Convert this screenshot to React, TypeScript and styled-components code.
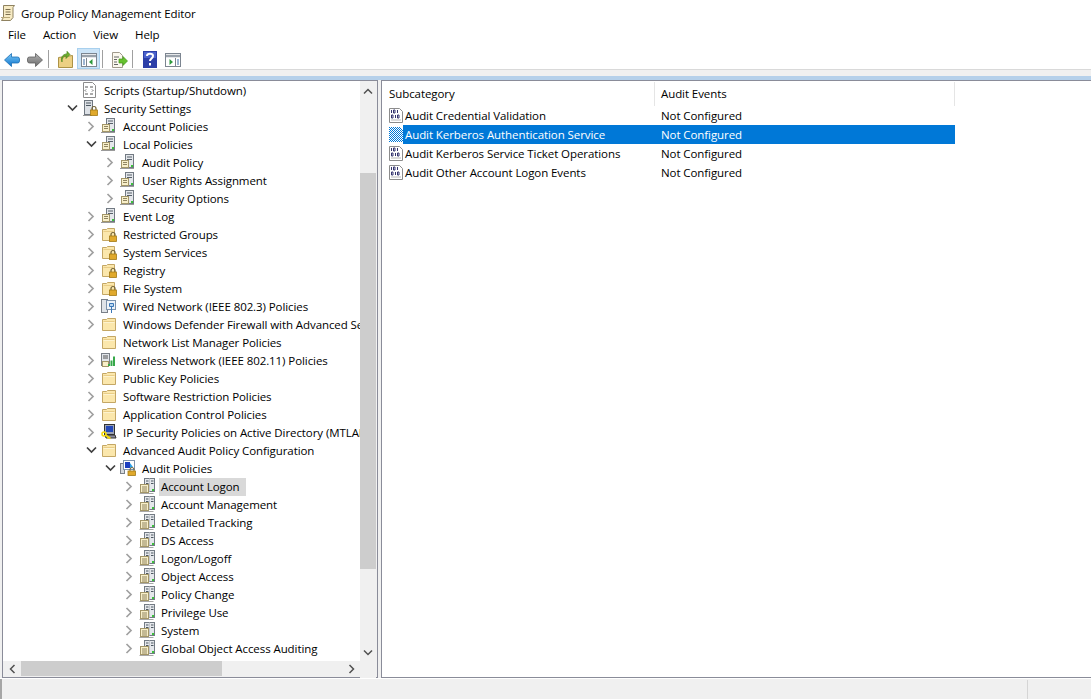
import React from "react";
import styled, { createGlobalStyle } from "styled-components";

const Global = createGlobalStyle`
  html, body { margin: 0; padding: 0; height: 100%; background: #fff; overflow: hidden; }
  #root { height: 100%; }
  * { box-sizing: border-box; }
`;

const Win = styled.div`
  width: 1091px; height: 699px; display: flex; flex-direction: column;
  font-family: "Open Sans", "Noto Sans", sans-serif; font-size: 11.5px; letter-spacing: -0.08px; color: #000; background: #fff; overflow: hidden;
`;
const TitleBar = styled.div`
  height: 24px; display: flex; align-items: center; gap: 5px; padding: 2px 0 0 0;
`;
const MenuBar = styled.div`
  height: 22px; display: flex; align-items: center; padding: 0 0 2px 1px;
`;
const MenuItem = styled.div`
  padding: 0 7px; margin-right: 3px;
`;
const ToolBar = styled.div`
  height: 24px; display: flex; align-items: flex-end; border-bottom: 1px solid #d9d9d9;
`;
const ToolBtn = styled.div<{ $on?: boolean; $w?: number }>`
  width: ${p => p.$w ?? 23}px; height: 21px; padding-top: 2px; display: flex; align-items: center; justify-content: center; flex: none;
  background: ${p => (p.$on ? "#cce4f7" : "transparent")};
  border: 1px solid ${p => (p.$on ? "#a8d0ee" : "transparent")};
`;
const ToolSep = styled.div`
  width: 1px; height: 18px; background: #a0a0a0; margin: 0 5px 1px 2px; flex: none;
`;
const Strip = styled.div`
  height: 6px; background: #f0f0f0;
`;
const BlueStrip = styled.div`
  height: 4px; background: #b5d0ea;
`;
const Split = styled.div`
  flex: 1; min-height: 0; display: flex; background: #f0f0f0; padding-left: 2px;
`;
const LeftPane = styled.div`
  width: 376px; border: 1px solid #8a8c99; background: #f0f0f0;
  display: grid; grid-template-columns: 357px 16px; grid-template-rows: 580px 17px;
`;
const TreeView = styled.div`
  background: #fff; overflow: hidden;
`;
const Row = styled.div<{ $level: number }>`
  height: 18px; display: flex; align-items: center;
  padding-left: ${p => 62 + p.$level * 19}px;
  white-space: nowrap;
`;
const Chev = styled.div`
  width: 14px; height: 18px; display: flex; align-items: center; justify-content: center; flex: none; margin-right: 3px;
`;
const IconWrap = styled.div`
  width: 16px; height: 16px; flex: none; display: flex; align-items: center; justify-content: center; margin-right: 4px;
`;
const Label = styled.span<{ $sel?: boolean }>`
  padding: 0 6px 0 2px; height: 18px; line-height: 17px; flex: none; align-self: flex-start; margin-top: 1px;
  background: ${p => (p.$sel ? "#d9d9d9" : "transparent")};
`;
const VBar = styled.div`
  background: #f0f0f0; display: flex; flex-direction: column; align-items: stretch;
`;
const ArrowUp = styled.div`
  height: 16px; padding-top: 4px; display: flex; align-items: center; justify-content: center; flex: none;
`;
const ArrowDown = styled.div`
  height: 16px; padding-bottom: 2px; display: flex; align-items: center; justify-content: center; flex: none;
`;
const VTrack = styled.div`
  flex: 1; padding: 76px 0;
`;
const Thumb = styled.div`
  background: #cdcdcd; height: 100%;
`;
const HBar = styled.div`
  background: #f0f0f0; display: flex; align-items: stretch; height: 15px;
`;
const HArrow = styled.div`
  width: 18px; display: flex; align-items: center; justify-content: center; flex: none;
`;
const HTrack = styled.div`
  flex: 1; display: flex; align-items: stretch;
`;
const HThumb = styled.div`
  width: 201px; background: #cdcdcd;
`;
const Corner = styled.div`
  background: #f0f0f0;
`;
const Gap = styled.div`
  width: 3px; flex: none; background: #f0f0f0;
`;
const RightPane = styled.div`
  flex: 1; border: solid #8a8c99; border-width: 1px 0 1px 1px; background: #fff; padding-left: 1px;
`;
const Header = styled.div`
  display: flex; height: 25px; width: 572px;
`;
const HeadCell = styled.div<{ $w: number }>`
  width: ${p => p.$w}px; height: 24px; margin-top: 1px; padding: 0 0 2px 6px; display: flex; align-items: center; border-right: 1px solid #e5e5e5; flex: none;
`;
const ListRow = styled.div`
  height: 19px; display: flex; width: 572px; align-items: center; padding-left: 6px;
`;
const ListName = styled.div`
  display: flex; align-items: stretch; height: 19px; flex: 1;
`;
const NameText = styled.div<{ $sel?: boolean }>`
  width: 252px; padding-left: 2px; line-height: 20px; white-space: nowrap; flex: none;
  background: ${p => (p.$sel ? "#0078d7" : "transparent")};
  color: ${p => (p.$sel ? "#fff" : "#000")};
`;
const EventText = styled.div<{ $sel?: boolean }>`
  flex: 1; padding-left: 6px; line-height: 20px; white-space: nowrap;
  background: ${p => (p.$sel ? "#0078d7" : "transparent")};
  color: ${p => (p.$sel ? "#fff" : "#000")};
`;
const ListIcon = styled.div`
  width: 14px; flex: none; display: flex; align-items: center;
`;
const StatusBar = styled.div`
  height: 20px; background: #f0f0f0; display: flex; justify-content: flex-end;
  border-left: 2px solid #a6a6a6; margin-top: 1px;
`;
const StatusCell = styled.div`
  width: 64px; border-left: 1px solid #d5d5d5; margin-top: 1px;
`;

const ChevR = () => (
  <svg width="8" height="11" viewBox="0 0 8 11"><path d="M1.500 1l4.500 4.500L1.500 10" fill="none" stroke="#a0a0a0" strokeWidth="1.700" /></svg>
);
const ChevD = () => (
  <svg width="11" height="8" viewBox="0 0 11 8"><path d="M1 1.500l4.500 4.500L10 1.500" fill="none" stroke="#404040" strokeWidth="1.700" /></svg>
);

const Policy = () => (
  <svg width="16" height="16" viewBox="0 0 16 16">
    <rect x="5.500" y="0.500" width="8" height="13" fill="#e4e7eb" stroke="#727a83" />
    <path d="M7 3h5M7 5.500h5" stroke="#56606a" />
    <rect x="11" y="11" width="2" height="2" fill="#3cc13c" />
    <rect x="1.500" y="6.500" width="7" height="7" fill="#f8efc9" stroke="#a39668" />
    <path d="M3 8.500h4M3 10.500h4" stroke="#8f8460" />
    <path d="M0 14.500h14" stroke="#9a9a9a" />
  </svg>
);
const Folder = () => (
  <svg width="16" height="16" viewBox="0 0 16 16">
    <path d="M1.500 3.500v11h13V2.500H6.500l-1 1z" fill="#fbe7ac" stroke="#c4a765" />
    <path d="M2.500 5.500h11" stroke="#e9cd87" />
    <path d="M2.500 6.500h11" stroke="#fdf3d0" />
  </svg>
);
const LockBadge = () => (
  <g>
    <path d="M10 10V8.500a2 2 0 0 1 4 0V10" fill="none" stroke="#6f6034" strokeWidth="1.200" />
    <rect x="8.500" y="10" width="7" height="5.500" fill="#e0a92c" stroke="#a47a16" strokeWidth="0.800" />
  </g>
);
const LockFolder = () => (
  <svg width="16" height="16" viewBox="0 0 16 16">
    <path d="M1.500 3.500v11h12V2.500H6.500l-1 1z" fill="#fbe7ac" stroke="#c4a765" />
    <path d="M2.500 5.500h10" stroke="#e9cd87" />
    <LockBadge />
  </svg>
);
const Secure = () => (
  <svg width="16" height="16" viewBox="0 0 16 16">
    <rect x="2.500" y="0.500" width="8" height="14" fill="#dde1e6" stroke="#6f7780" />
    <path d="M4 3h5M4 5.500h5" stroke="#4d5862" />
    <path d="M1 15.500h9" stroke="#999" />
    <LockBadge />
  </svg>
);
const Script = () => (
  <svg width="16" height="16" viewBox="0 0 16 16">
    <path d="M1.500 0.500h9l3 3v12h-12z" fill="#fff" stroke="#8c8c8c" />
    <path d="M3 5h3M8 5h3M4 7.500L3 8.500l1 1M10 7.500l1 1-1 1M3 12h3M8 12h3" stroke="#555" fill="none" />
  </svg>
);
const Wired = () => (
  <svg width="16" height="16" viewBox="0 0 16 16">
    <rect x="0.500" y="1.500" width="6" height="13" fill="#dfe3e8" stroke="#7a8088" />
    <rect x="5.500" y="2.500" width="9" height="9" fill="#eef3f8" stroke="#7d93ac" />
    <path d="M8.500 5.500h4v3h-4zM10.500 8.500v6.500" stroke="#3c78b8" fill="#bcd7ef" />
  </svg>
);
const Wireless = () => (
  <svg width="16" height="16" viewBox="0 0 16 16">
    <rect x="0.500" y="1.500" width="8" height="12" fill="#e1e5ea" stroke="#7a8088" />
    <path d="M2 4h5M2 6h5" stroke="#555" />
    <rect x="1.500" y="9.500" width="6" height="5" fill="#f8efc9" stroke="#a39668" />
    <path d="M7 14h2v-2H7zM9.500 14h2V8.500h-2zM12 14h2V4.500h-2z" fill="#37a84a" />
  </svg>
);
const IPSec = () => (
  <svg width="16" height="16" viewBox="0 0 16 16">
    <rect x="3.500" y="0.500" width="10" height="10" fill="#9aa2b4" stroke="#333" />
    <rect x="5" y="2" width="7" height="6" fill="#2348b8" />
    <path d="M4 11h10l1 3H5z" fill="#8d8d9a" stroke="#333" />
    <circle cx="3" cy="10" r="2" fill="none" stroke="#f4d80c" strokeWidth="1.600" />
    <path d="M4.500 11l5 3.500M7.500 13l-1 1.500" stroke="#f4d80c" strokeWidth="1.600" />
  </svg>
);
const Audit = () => (
  <svg width="16" height="16" viewBox="0 0 16 16">
    <rect x="0.500" y="3.500" width="4" height="10" fill="#d5d9de" stroke="#7a8088" />
    <rect x="3.500" y="0.500" width="11" height="9" fill="#fff" stroke="#7d93ac" />
    <rect x="5" y="2" width="5" height="6" fill="#1c3fc0" />
    <path d="M10 3l3 4-3 1z" fill="#2aa0e8" />
    <path d="M10 11V9.500a2 2 0 0 1 4 0V11" fill="none" stroke="#6f6034" />
    <rect x="8" y="11" width="7.500" height="4.500" fill="#e0a92c" stroke="#a47a16" strokeWidth="0.800" />
  </svg>
);
const Big = () => (
  <svg width="16" height="16" viewBox="0 0 16 16">
    <rect x="5.500" y="0.500" width="10" height="13" fill="#e4e7eb" stroke="#737b84" />
    <path d="M10.500 .5v13" stroke="#c3c8ce" />
    <path d="M7 3h2.500M12 3h2.500M7 5.500h2.500M12 5.500h2.500" stroke="#4d5862" />
    <rect x="13" y="11" width="2" height="2" fill="#3cc13c" />
    <rect x="1.500" y="6.500" width="8" height="8" fill="#f8efc9" stroke="#a39668" />
    <path d="M3 9h5M3 11h5M3 13h5" stroke="#8f8460" />
    <path d="M0.500 15.500h14" stroke="#a8a8a8" />
  </svg>
);
const Bits = () => (
  <g fill="none" stroke="#33336e">
    <path d="M2.500 2v3M4.500 2h1.500v3H4.500zM8.500 2v3" />
    <path d="M2.500 7h1.500v3H2.500zM6.500 7v3M8.500 7H10v3H8.500z" />
  </g>
);
const Binary = () => (
  <svg width="14" height="15" viewBox="0 0 14 15">
    <path d="M0.500 0.500h10l3 3v11H.5z" fill="#fff" stroke="#8c8c8c" />
    <Bits />
    <path d="M2 12h10" stroke="#b8b8b8" />
  </svg>
);
const BinarySel = () => (
  <svg width="14" height="15" viewBox="0 0 14 15">
    <defs>
      <pattern id="dither" width="2" height="2" patternUnits="userSpaceOnUse">
        <rect width="2" height="2" fill="#fff" />
        <rect width="1" height="1" fill="#0078d7" />
        <rect x="1" y="1" width="1" height="1" fill="#0078d7" />
      </pattern>
    </defs>
    <path d="M0 0h11l3 3v12H0z" fill="url(#dither)" />
  </svg>
);
const Scroll = () => (
  <svg width="16" height="18" viewBox="0 0 16 18">
    <path d="M3.500 1.500h11l-1.500 2v10l-2.500 3H1.500l2-3z" fill="#f7ebc4" stroke="#8f8260" />
    <path d="M5.500 5.500h5M5.500 8h5M5.500 10.500h5" stroke="#7d7050" />
    <path d="M1 13.500h9" stroke="#b8a878" />
  </svg>
);
const Back = () => (
  <svg width="16" height="14" viewBox="0 0 16 14">
    <defs>
      <linearGradient id="backG" x1="0" y1="0" x2="0" y2="1">
        <stop offset="0" stopColor="#7ccaf7" />
        <stop offset="1" stopColor="#0d73cc" />
      </linearGradient>
    </defs>
    <path d="M0.500 7L7.500 .5v3.500h6a2 2 0 0 1 2 2v2a2 2 0 0 1-2 2h-6v3.500z" fill="url(#backG)" stroke="#1b6fb5" strokeWidth=".8" />
  </svg>
);
const Fwd = () => (
  <svg width="16" height="14" viewBox="0 0 16 14">
    <defs>
      <linearGradient id="fwdG" x1="0" y1="0" x2="0" y2="1">
        <stop offset="0" stopColor="#b4b4b4" />
        <stop offset="1" stopColor="#6a6a6a" />
      </linearGradient>
    </defs>
    <path d="M15.500 7L8.500 .5v3.500h-6a2 2 0 0 0-2 2v2a2 2 0 0 0 2 2h6v3.500z" fill="url(#fwdG)" stroke="#5e5e5e" strokeWidth=".8" />
  </svg>
);
const UpFolder = () => (
  <svg width="15" height="17" viewBox="0 0 15 17">
    <path d="M.5 6.500v10h14v-12z" fill="#ecd083" stroke="#ad9346" />
    <path d="M4 11c0-4 1.500-6 4-6.500V7.500l4-4-3-3.200v2.400C4 3.500 2.500 7 4 11z" fill="#6fae2e" stroke="#3d7d12" strokeWidth=".6" />
  </svg>
);
const PaneLeft = () => (
  <svg width="16" height="14" viewBox="0 0 16 14">
    <rect x="0.500" y="0.500" width="15" height="13" fill="#fff" stroke="#7c8590" />
    <path d="M1 3h14" stroke="#9aa2ab" strokeWidth="2.500" />
    <path d="M5.500 5v8" stroke="#7c8590" />
    <path d="M2 7h2M2 9h2M2 11h2" stroke="#3d6fa8" />
    <path d="M11.500 6v6L8 9z" fill="#2f9a3e" />
  </svg>
);
const PaneRight = () => (
  <svg width="16" height="14" viewBox="0 0 16 14">
    <rect x="0.500" y="0.500" width="15" height="13" fill="#fff" stroke="#7c8590" />
    <path d="M1 3h14" stroke="#9aa2ab" strokeWidth="2.500" />
    <path d="M10.500 5v8" stroke="#7c8590" />
    <path d="M12 7h2M12 9h2M12 11h2" stroke="#3d6fa8" />
    <path d="M4.500 6v6L8 9z" fill="#2f9a3e" />
  </svg>
);
const Export = () => (
  <svg width="17" height="16" viewBox="0 0 17 16">
    <path d="M1.500 .5h7l3 3v12h-10z" fill="#fbf8ee" stroke="#a09a8c" />
    <path d="M3 5h5M3 7.500h3M3 10h3M3 12.500h4" stroke="#666" />
    <path d="M8 7h4V4.500L16.500 9 12 13.500V11H8z" fill="#66c12f" stroke="#3f9a18" strokeWidth=".7" />
  </svg>
);
const HelpIcon = () => (
  <svg width="14" height="17" viewBox="0 0 14 17">
    <rect width="14" height="17" fill="#2c3fa8" />
    <rect x="1" y="1" width="12" height="6" fill="#4a62cc" />
    <path d="M4 5c0-3 6-3 6 0 0 2.500-3 2.500-3 5" fill="none" stroke="#fff" strokeWidth="2" />
    <rect x="6" y="12" width="2" height="2.500" fill="#fff" />
  </svg>
);
const Up = () => (
  <svg width="10" height="7" viewBox="0 0 10 7"><path d="M1 5.500l4-4 4 4" fill="none" stroke="#505050" strokeWidth="1.500" /></svg>
);
const Down = () => (
  <svg width="10" height="7" viewBox="0 0 10 7"><path d="M1 1.500l4 4 4-4" fill="none" stroke="#505050" strokeWidth="1.500" /></svg>
);
const Left = () => (
  <svg width="7" height="10" viewBox="0 0 7 10"><path d="M5.500 1l-4 4 4 4" fill="none" stroke="#505050" strokeWidth="1.500" /></svg>
);
const Right = () => (
  <svg width="7" height="10" viewBox="0 0 7 10"><path d="M1.500 1l4 4-4 4" fill="none" stroke="#505050" strokeWidth="1.500" /></svg>
);

type Item = { t: string; l: number; i: React.ComponentType; c?: "r" | "d" | "n"; sel?: boolean };
const items: Item[] = [
  { t: "Scripts (Startup/Shutdown)", l: 1, i: Script, c: "n" },
  { t: "Security Settings", l: 1, i: Secure, c: "d" },
  { t: "Account Policies", l: 2, i: Policy },
  { t: "Local Policies", l: 2, i: Policy, c: "d" },
  { t: "Audit Policy", l: 3, i: Policy },
  { t: "User Rights Assignment", l: 3, i: Policy },
  { t: "Security Options", l: 3, i: Policy },
  { t: "Event Log", l: 2, i: Policy },
  { t: "Restricted Groups", l: 2, i: LockFolder },
  { t: "System Services", l: 2, i: LockFolder },
  { t: "Registry", l: 2, i: LockFolder },
  { t: "File System", l: 2, i: LockFolder },
  { t: "Wired Network (IEEE 802.3) Policies", l: 2, i: Wired },
  { t: "Windows Defender Firewall with Advanced Security", l: 2, i: Folder },
  { t: "Network List Manager Policies", l: 2, i: Folder, c: "n" },
  { t: "Wireless Network (IEEE 802.11) Policies", l: 2, i: Wireless },
  { t: "Public Key Policies", l: 2, i: Folder },
  { t: "Software Restriction Policies", l: 2, i: Folder },
  { t: "Application Control Policies", l: 2, i: Folder },
  { t: "IP Security Policies on Active Directory (MTLAB.local)", l: 2, i: IPSec },
  { t: "Advanced Audit Policy Configuration", l: 2, i: Folder, c: "d" },
  { t: "Audit Policies", l: 3, i: Audit, c: "d" },
  { t: "Account Logon", l: 4, i: Big, sel: true },
  { t: "Account Management", l: 4, i: Big },
  { t: "Detailed Tracking", l: 4, i: Big },
  { t: "DS Access", l: 4, i: Big },
  { t: "Logon/Logoff", l: 4, i: Big },
  { t: "Object Access", l: 4, i: Big },
  { t: "Policy Change", l: 4, i: Big },
  { t: "Privilege Use", l: 4, i: Big },
  { t: "System", l: 4, i: Big },
  { t: "Global Object Access Auditing", l: 4, i: Big },
];

const rows = [
  "Audit Credential Validation",
  "Audit Kerberos Authentication Service",
  "Audit Kerberos Service Ticket Operations",
  "Audit Other Account Logon Events",
];

export default function App() {
  return (
    <Win>
      <Global />
      <TitleBar><Scroll />Group Policy Management Editor</TitleBar>
      <MenuBar>
        {["File", "Action", "View", "Help"].map(m => <MenuItem key={m}>{m}</MenuItem>)}
      </MenuBar>
      <ToolBar>
        <ToolBtn><Back /></ToolBtn>
        <ToolBtn><Fwd /></ToolBtn>
        <ToolSep />
        <ToolBtn><UpFolder /></ToolBtn>
        <ToolBtn $on><PaneLeft /></ToolBtn>
        <ToolSep />
        <ToolBtn $w={22}><Export /></ToolBtn>
        <ToolSep />
        <ToolBtn><HelpIcon /></ToolBtn>
        <ToolBtn><PaneRight /></ToolBtn>
      </ToolBar>
      <Strip />
      <BlueStrip />
      <Split>
        <LeftPane>
          <TreeView>
            {items.map(it => {
              const I = it.i;
              return (
                <Row key={it.t} $level={it.l - 1}>
                  <Chev>{it.c === "n" ? null : it.c === "d" ? <ChevD /> : <ChevR />}</Chev>
                  <IconWrap><I /></IconWrap>
                  <Label $sel={it.sel}>{it.t}</Label>
                </Row>
              );
            })}
          </TreeView>
          <VBar>
            <ArrowUp><Up /></ArrowUp>
            <VTrack><Thumb /></VTrack>
            <ArrowDown><Down /></ArrowDown>
          </VBar>
          <HBar>
            <HArrow><Left /></HArrow>
            <HTrack><HThumb /></HTrack>
            <HArrow><Right /></HArrow>
          </HBar>
          <Corner />
        </LeftPane>
        <Gap />
        <RightPane>
          <Header>
            <HeadCell $w={272}>Subcategory</HeadCell>
            <HeadCell $w={300}>Audit Events</HeadCell>
          </Header>
          {rows.map((r, i) => (
            <ListRow key={r}>
              <ListIcon>{i === 1 ? <BinarySel /> : <Binary />}</ListIcon>
              <ListName>
                <NameText $sel={i === 1}>{r}</NameText>
                <EventText $sel={i === 1}>Not Configured</EventText>
              </ListName>
            </ListRow>
          ))}
        </RightPane>
      </Split>
      <StatusBar><StatusCell /></StatusBar>
    </Win>
  );
}
